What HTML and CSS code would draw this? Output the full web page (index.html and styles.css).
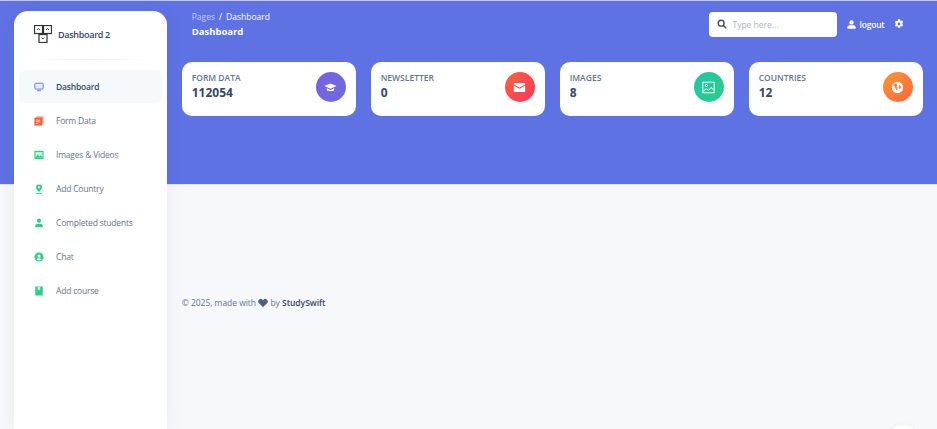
FILE: index.html
```html
<!DOCTYPE html>
<html lang="en">
<head>
    <meta charset="UTF-8">
    <meta name="viewport" content="width=device-width, initial-scale=1.0">
    <title>Dashboard 2</title>
    <link rel="stylesheet" href="styles.css">
</head>
<body>
    <div class="top-band"></div>
    <div class="page">
        <aside class="sidebar">
            <div class="brand">
                <svg class="brand-logo" viewBox="0 0 18 18" fill="none" stroke="#333" stroke-width="1.200">
                    <rect x="0.500" y="0.500" width="8" height="8"/>
                    <rect x="9.500" y="0.500" width="8" height="8"/>
                    <rect x="5" y="9.500" width="8" height="8"/>
                    <path d="M3 5l1.500-1.500L6 5M12 5l1.500-1.500L15 5M7.500 12.500 9 14l1.500-1.500" stroke-width="0.900"/>
                </svg>
                <span>Dashboard 2</span>
            </div>
            <hr class="divider">
            <ul class="nav">
                <li class="nav-item active">
                    <svg class="nav-icon" viewBox="0 0 12 12" fill="none" stroke="#5e72e4" stroke-width="1.100"><rect x="1" y="1.500" width="10" height="7" rx="1" fill="#eef0fc"/><path d="M3.500 10.500h5"/></svg>
                    Dashboard
                </li>
                <li class="nav-item">
                    <svg class="nav-icon" viewBox="0 0 12 12"><rect x="2.500" y="0.500" width="9" height="9" fill="#f9a08a"/><rect x="0.500" y="2" width="9.500" height="9.500" fill="#f5603c"/><path d="M2.500 5h5M2.500 7h5M2.500 9h2.500" stroke="#fff" stroke-width="0.800"/></svg>
                    Form Data
                </li>
                <li class="nav-item">
                    <svg class="nav-icon" viewBox="0 0 12 12"><rect x="0.500" y="1" width="11" height="10" fill="#2dce89"/><rect x="1.800" y="2.500" width="8.400" height="6.500" fill="#c9f3e0"/><path d="M1.800 9l2.700-3.500L6.500 8 8 6l2.200 3z" fill="#2dce89"/></svg>
                    Images &amp; Videos
                </li>
                <li class="nav-item">
                    <svg class="nav-icon" viewBox="0 0 12 12"><path d="M6 .5a3.600 3.600 0 0 1 3.600 3.600C9.600 6.500 6 9.500 6 9.500S2.400 6.500 2.400 4.100A3.600 3.600 0 0 1 6 .5z" fill="#2dce89"/><circle cx="6" cy="4" r="1.300" fill="#fff"/><path d="M2.500 11.300h7" stroke="#2dce89" stroke-width="1.200"/></svg>
                    Add Country
                </li>
                <li class="nav-item">
                    <svg class="nav-icon" viewBox="0 0 12 12" fill="#2dce89"><circle cx="6" cy="3.200" r="2.500"/><path d="M1.500 11V9.500C1.500 7.800 3 6.800 4.500 6.800h3c1.500 0 3 1 3 2.700V11z"/></svg>
                    Completed students
                </li>
                <li class="nav-item">
                    <svg class="nav-icon" viewBox="0 0 12 12"><circle cx="6" cy="6" r="5.500" fill="#2dce89"/><circle cx="6" cy="4.800" r="1.900" fill="#fff"/><path d="M3 9.300C3.500 7.800 4.800 7.500 6 7.500s2.500.3 3 1.800C8 10.300 4 10.300 3 9.300z" fill="#fff"/></svg>
                    Chat
                </li>
                <li class="nav-item">
                    <svg class="nav-icon" viewBox="0 0 12 12"><path d="M1.500 .5h9v11H2.500a1 1 0 0 1-1-1z" fill="#2dce89"/><path d="M4.500 .5h3v5L6 4.300 4.500 5.500z" fill="#c9f3e0"/></svg>
                    Add course
                </li>
            </ul>
        </aside>

        <main class="main">
            <header class="topbar">
                <div>
                    <div class="crumbs"><span class="crumb-muted">Pages</span><span class="crumb-sep">/</span>Dashboard</div>
                    <h1 class="page-title">Dashboard</h1>
                </div>
                <div class="top-actions">
                    <label class="search">
                        <svg class="search-icon" viewBox="0 0 12 12" fill="none" stroke="#414e68" stroke-width="1.700"><circle cx="5" cy="5" r="3.500"/><path d="M7.800 7.800 11 11"/></svg>
                        <input type="text" placeholder="Type here...">
                    </label>
                    <span class="logout">
                        <svg class="logout-icon" viewBox="0 0 12 12" fill="#fff"><circle cx="6" cy="3.200" r="2.900"/><path d="M.5 11.800V9.800C.5 8 2 7 3.500 7h5c1.500 0 3 1 3 2.800v2z"/></svg>
                        logout
                    </span>
                    <svg class="gear" viewBox="0 0 12 12"><path d="M6 .2l1.200.2.300 1.500 1 .5 1.300-.5 1.200 1.900-1 1 .1.700-.1.700 1 1-1.200 1.900-1.300-.5-1 .5-.3 1.500H4.800l-.3-1.500-1-.5-1.300.5L1 8.200l1-1-.1-.7.100-1.500-1-1 1.200-1.900 1.300.5 1-.5L4.800.4z" fill="#fff"/><circle cx="6" cy="6" r="1.700" fill="#5e72e4"/></svg>
                </div>
            </header>

            <section class="cards">
                <div class="card">
                    <div>
                        <div class="card-label">FORM DATA</div>
                        <div class="card-value">112054</div>
                    </div>
                    <div class="card-icon purple">
                        <svg viewBox="0 0 16 16" fill="#fff"><path d="M8 3 .5 6.300 8 9.600l7.500-3.300z"/><path d="M3.500 9v2.500C5 13 11 13 12.500 11.500V9L8 11z"/></svg>
                    </div>
                </div>
                <div class="card">
                    <div>
                        <div class="card-label">NEWSLETTER</div>
                        <div class="card-value">0</div>
                    </div>
                    <div class="card-icon red">
                        <svg viewBox="0 0 16 16" fill="#fff"><path d="M2 2.500h12a1 1 0 0 1 1 1v.8L8 8 1 4.300v-.8a1 1 0 0 1 1-1z"/><path d="M1 5.800 8 9.500l7-3.700V12.500a1 1 0 0 1-1 1H2a1 1 0 0 1-1-1z"/></svg>
                    </div>
                </div>
                <div class="card">
                    <div>
                        <div class="card-label">IMAGES</div>
                        <div class="card-value">8</div>
                    </div>
                    <div class="card-icon green">
                        <svg viewBox="0 0 16 16" fill="none" stroke="#fff" stroke-width="1.200"><rect x="1" y="1.500" width="14" height="13"/><circle cx="5.500" cy="5.500" r="1.300"/><path d="M1.500 12.500l4-3 2.500 2 3-3.500 3.500 3"/></svg>
                    </div>
                </div>
                <div class="card">
                    <div>
                        <div class="card-label">COUNTRIES</div>
                        <div class="card-value">12</div>
                    </div>
                    <div class="card-icon orange">
                        <svg viewBox="0 0 16 16"><circle cx="8" cy="8" r="7" fill="#fff"/><path d="M6 2.500 8 5 6.500 6.500 8 8.500l-.5 3.500-2-2.500-1-3L3 5.500zM10 5l2.500 1.500-.5 2.500-1.500 1-.8-2.500z" fill="#fb7a3a"/></svg>
                    </div>
                </div>
            </section>

            <footer class="footer">
                © 2025, made with
                <svg class="heart" viewBox="0 0 12 12" fill="#525f7f"><path d="M6 11 1.200 6.200A3 3 0 0 1 1.200 2a3 3 0 0 1 4.200 0l.6.600.6-.6a3 3 0 0 1 4.200 0 3 3 0 0 1 0 4.200z"/></svg>
                by <b class="footer-link">StudySwift</b>
            </footer>
        </main>
    </div>
    <div class="scroll-btn"></div>
</body>
</html>
```

FILE: styles.css
```css
:root {
    --primary-color: #5e72e4;
    --background-color: #f6f8fb;
    --text-color: #344767;
    --muted-color: #67748e;
}
html, body {
    height: 100%;
}
body {
    font-family: "Open Sans", Arial, sans-serif;
    margin: 0;
    overflow: hidden;
    background-color: var(--background-color);
    color: var(--text-color);
    position: relative;
}
.top-band {
    position: absolute;
    left: 0;
    right: 0;
    top: 0;
    height: 183px;
    background: var(--primary-color);
    border-top: 1px solid #c4c6cc;
    border-bottom: 1px solid #e3e6ee;
}
.page {
    position: relative;
    display: flex;
    height: 100%;
    padding: 11px 14.300px 0 14px;
    box-sizing: border-box;
}
.sidebar {
    width: 153px;
    flex: none;
    background: #fff;
    border-radius: 14px 14px 0 0;
    box-shadow: 0 4px 20px rgba(0, 0, 0, 0.06);
}
.brand {
    display: flex;
    align-items: center;
    gap: 6px;
    padding: 7px 0 0 20px;
    height: 32px;
    margin-bottom: 9px;
    font-size: 9px;
    letter-spacing: -0.3px;
    font-weight: 600;
    color: var(--text-color);
}
.brand-logo {
    width: 18px;
    height: 18px;
}
.divider {
    border: 0;
    height: 1px;
    margin: 0 16px 10px;
    background: linear-gradient(90deg, transparent, #eceef2, transparent);
}
.nav {
    list-style: none;
    margin: 0;
    padding: 0 5px;
}
.nav-item {
    display: flex;
    align-items: center;
    height: 33px;
    margin-bottom: 1px;
    padding-left: 15px;
    font-size: 8.500px;
    color: var(--muted-color);
    letter-spacing: -0.2px;
    border-radius: 6px;
}
.nav-item.active {
    background: #f6f9fc;
    color: var(--text-color);
    font-weight: 600;
}
.nav-icon {
    width: 10px;
    height: 10px;
    margin-right: 12px;
    flex: none;
}
.main {
    flex: 1;
    min-width: 0;
    padding-left: 14.700px;
}
.topbar {
    display: flex;
    justify-content: space-between;
    height: 51px;
    padding-left: 10px;
}
.crumbs {
    font-size: 8.500px;
    line-height: 12px;
    color: #fff;
}
.crumb-muted {
    opacity: 0.6;
}
.crumb-sep {
    margin: 0 4px;
}
.page-title {
    margin: 2px 0 0;
    font-size: 9.500px;
    line-height: 14px;
    font-weight: 700;
    color: #fff;
}
.top-actions {
    display: flex;
    align-items: center;
    height: 26px;
    padding-right: 18.700px;
}
.search {
    display: flex;
    align-items: center;
    width: 128px;
    height: 25px;
    background: #fff;
    border-radius: 4px;
    padding-left: 8px;
    box-sizing: border-box;
}
.search-icon {
    width: 10px;
    height: 10px;
    margin-right: 5px;
}
.search input {
    border: 0;
    outline: 0;
    width: 90px;
    padding: 0;
    font: 8.500px "Open Sans", Arial, sans-serif;
}
.search input::placeholder {
    color: #adb5bd;
}
.logout {
    display: flex;
    align-items: center;
    margin-left: 10px;
    font-size: 8.500px;
    letter-spacing: -0.2px;
    font-weight: 600;
    color: #fff;
}
.logout-icon {
    width: 9px;
    height: 9px;
    margin-right: 3px;
}
.gear {
    width: 10px;
    height: 10px;
    margin-left: 9.500px;
}
.cards {
    display: grid;
    grid-template-columns: repeat(4, 1fr);
    gap: 15px;
}
.card {
    display: flex;
    justify-content: space-between;
    align-items: flex-start;
    height: 54px;
    padding: 10px;
    background: #fff;
    border-radius: 10px;
    box-sizing: border-box;
}
.card-label {
    font-size: 8.500px;
    line-height: 12px;
    font-weight: 600;
    color: var(--muted-color);
}
.card-value {
    font-size: 12px;
    line-height: 17px;
    font-weight: 700;
    color: var(--text-color);
}
.card-icon {
    width: 30px;
    height: 30px;
    border-radius: 50%;
    display: flex;
    align-items: center;
    justify-content: center;
}
.card-icon svg {
    width: 13px;
    height: 13px;
}
.purple { background: linear-gradient(135deg, #7c5fe0, #6a6ce0); }
.red { background: linear-gradient(135deg, #fb6340, #f5365c); }
.green { background: linear-gradient(135deg, #20c4a8, #2dce89); }
.orange { background: linear-gradient(135deg, #fb9a32, #fb6340); }
.footer {
    margin-top: 181px;
    font-size: 8.500px;
    letter-spacing: -0.03px;
    line-height: 12px;
    color: var(--muted-color);
}
.heart {
    width: 10px;
    height: 10px;
    vertical-align: -1.500px;
}
.footer-link {
    font-weight: 600;
    color: var(--text-color);
}
.scroll-btn {
    position: absolute;
    left: 887px;
    top: 425px;
    width: 32px;
    height: 32px;
    border-radius: 50%;
    background: #fff;
    box-shadow: 0 2px 8px rgba(0, 0, 0, 0.06);
}
```
